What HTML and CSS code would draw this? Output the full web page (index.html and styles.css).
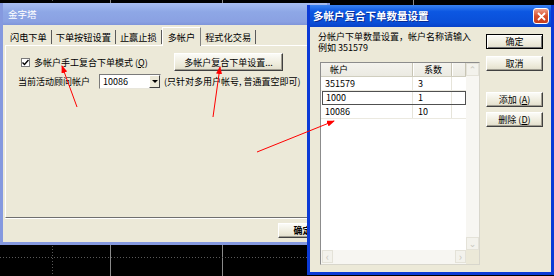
FILE: index.html
```html
<!DOCTYPE html>
<html lang="zh">
<head>
  <meta charset="UTF-8" />
  <title>金字塔</title>
  <link rel="stylesheet" href="styles.css">
</head>
<body>

  <div class="desk">
    <!-- chart background -->
    <svg class="chart" width="554" height="276">
      <line x1="52.5" y1="0" x2="52.5" y2="276" stroke="#5a5a5a" stroke-dasharray="1 2" />
      <line x1="110.5" y1="0" x2="110.5" y2="276" stroke="#8a8a8a" />
      <line x1="222.5" y1="0" x2="222.5" y2="276" stroke="#8a8a8a" />
      <line x1="413.5" y1="0" x2="413.5" y2="6" stroke="#8a8a8a" />
      <line x1="0" y1="257.5" x2="554" y2="257.5" stroke="#5a5a5a" stroke-dasharray="1 2" />
    </svg>

    <!-- main window -->
    <div class="win main-win">
      <div class="caption inactive">金字塔</div>
      <div class="client">
        <div class="tabs">
          <span class="tab">闪电下单</span>
          <span class="tab">下单按钮设置</span>
          <span class="tab">止赢止损</span>
          <span class="tab active">多帐户</span>
          <span class="tab">程式化交易</span>
        </div>
        <div class="panel">
          <div class="row">
            <label class="check">
              <span class="box">
                <svg width="7" height="7" viewBox="0 0 7 7"><path d="M0.5 3.5 L2.5 5.5 L6.5 1" fill="none" stroke="#000" stroke-width="1.4"/></svg>
              </span>
              <span>多帐户手工复合下单模式 (<u>Q</u>)</span>
            </label>
            <button class="btn wide">多帐户复合下单设置...</button>
          </div>
          <div class="row">
            <span class="label">当前活动顾问帐户</span>
            <div class="combo">
              <span class="combo-text">10086</span>
              <span class="drop"></span>
            </div>
            <span class="hint">(只针对多用户帐号, 普通置空即可)</span>
          </div>
        </div>
        <div class="footer">
          <button class="btn">确定</button>
        </div>
      </div>
    </div>

    <!-- settings dialog -->
    <div class="win dialog">
      <div class="caption active-cap">
        <span>多帐户复合下单数量设置</span>
        <span class="close">
          <svg width="9" height="9" viewBox="0 0 9 9"><path d="M1 1 L8 8 M8 1 L1 8" stroke="#fff" stroke-width="1.8"/></svg>
        </span>
      </div>
      <div class="client dlg-client">
        <div class="dlg-left">
          <p class="intro">分帐户下单数量设置，帐户名称请输入<br>例如 351579</p>
          <div class="list">
            <div class="list-main">
              <div class="list-cols">
                <div class="list-head">
                  <span class="c1">帐户</span>
                  <span class="c2">系数</span>
                  <span class="c3"></span>
                </div>
                <div class="list-row">
                  <span class="c1">351579</span><span class="c2">3</span><span class="c3"></span>
                </div>
                <div class="list-row focus">
                  <span class="c1">1000</span><span class="c2">1</span><span class="c3"></span>
                </div>
                <div class="list-row">
                  <span class="c1">10086</span><span class="c2">10</span><span class="c3"></span>
                </div>
              </div>
              <div class="vscroll">
                <span class="sbtn">&#8963;</span>
                <span class="sbtn">&#8964;</span>
              </div>
            </div>
            <div class="hscroll-row">
              <div class="hscroll">
                <span class="sbtn">&lsaquo;</span>
                <span class="sbtn">&rsaquo;</span>
              </div>
              <div class="corner"></div>
            </div>
          </div>
        </div>
        <div class="dlg-right">
          <button class="btn default">确定</button>
          <button class="btn">取消</button>
          <button class="btn gap">添加 (<u>A</u>)</button>
          <button class="btn">删除 (<u>D</u>)</button>
        </div>
      </div>
    </div>

    <!-- red arrows drawn over the screenshot -->
    <svg class="arrows" width="554" height="276">
      <defs>
        <marker id="head" markerWidth="8" markerHeight="6" refX="7" refY="3" orient="auto" markerUnits="userSpaceOnUse">
          <path d="M0 0 L8 3 L0 6 Z" fill="#f00"/>
        </marker>
      </defs>
      <line x1="77" y1="107" x2="62" y2="66" stroke="#f00" stroke-width="1" marker-end="url(#head)"/>
      <line x1="213" y1="117" x2="220" y2="67" stroke="#f00" stroke-width="1" marker-end="url(#head)"/>
      <line x1="257" y1="152" x2="334" y2="121" stroke="#f00" stroke-width="1" marker-end="url(#head)"/>
    </svg>
  </div>

</body>
</html>
```

FILE: styles.css
```css
* {
  box-sizing: border-box;
}

body {
  margin: 0;
  padding: 0;
  background-color: #000;
  font-family: "Noto Sans CJK SC", "DejaVu Sans", sans-serif;
  font-size: 9px;
  color: #000;
}

.desk {
  position: relative;
  width: 554px;
  height: 276px;
  overflow: hidden;
  background-color: #000;
}

.chart,
.arrows {
  position: absolute;
  top: 0;
  left: 0;
}

.arrows {
  pointer-events: none;
}

/* windows */

.win {
  position: absolute;
  display: flex;
  flex-direction: column;
  padding: 0 3px 3px 3px;
}

.main-win {
  left: 0;
  top: 3px;
  width: 330px;
  height: 242px;
  background-color: #8599df;
}

.dialog {
  left: 307px;
  top: 5px;
  width: 247px;
  height: 270px;
  background-color: #0b3ad6;
}

.caption {
  height: 22px;
  line-height: 22px;
  color: #fff;
  padding-left: 6px;
  display: flex;
  align-items: center;
  justify-content: space-between;
}

.caption.inactive {
  background: linear-gradient(to bottom, #a8bdf0, #8ea7e6 40%, #8aa1e2 85%, #7f95da);
  font-size: 9.5px;
  padding-left: 5px;
}

.caption.active-cap {
  background: linear-gradient(to bottom, #3a82f0, #0c57e2 30%, #0a4fd8 80%, #0842c9);
  font-size: 10.5px;
  font-weight: bold;
  padding-left: 3px;
  padding-right: 2px;
  text-shadow: 1px 1px 0 #0a2a90;
}

.close {
  width: 16px;
  height: 16px;
  border: 1px solid #fff;
  border-radius: 3px;
  background: linear-gradient(to bottom, #f0a08a, #d8502e 50%, #c43c1c);
  display: flex;
  align-items: center;
  justify-content: center;
}

.client {
  flex: 1;
  background-color: #ece9d8;
  display: flex;
  flex-direction: column;
}

/* main window content */

.tabs {
  display: flex;
  align-items: stretch;
  height: 18px;
  margin-top: 2px;
  padding-left: 3px;
  font-size: 9.2px;
}

.tab {
  display: flex;
  align-items: center;
  padding: 0 4px;
  border-right: 1px solid #5a5a5a;
  height: 14px;
  margin-top: 3px;
}

.tab.active {
  height: 19px;
  margin-top: 0;
  padding: 0 5px;
  border-right: 1px solid #808080;
  border-top: 1px solid #fff;
  border-left: 1px solid #fff;
  margin-bottom: -1px;
  background-color: #ece9d8;
  position: relative;
  z-index: 1;
}

.tab.active + .tab {
  padding-left: 4px;
}

.panel {
  height: 173px;
  margin-left: 2px;
  border-top: 1px solid #fff;
  border-left: 1px solid #fff;
  border-bottom: 1px solid #6f6f6f;
  box-shadow: 0 1px 0 #fff;
  padding: 7px 0 0 12px;
  display: flex;
  flex-direction: column;
  gap: 3px;
}

.row {
  display: flex;
  align-items: center;
  white-space: nowrap;
}

.check {
  display: flex;
  align-items: center;
  gap: 4px;
  margin-left: 3px;
  width: 150px;
}

.box {
  width: 9px;
  height: 9px;
  background-color: #fff;
  border: 1px solid #7a7a7a;
  display: flex;
  align-items: center;
  justify-content: center;
}

.btn {
  font-family: inherit;
  font-size: 9px;
  height: 15px;
  padding: 0;
  background: linear-gradient(to bottom, #fbfbf7, #ece9d8 70%, #e0ddcc);
  border: 1px solid;
  border-color: #fff #404040 #404040 #fff;
  box-shadow: inset -1px -1px 0 #a09d90;
  color: #000;
  line-height: 13px;
}

.btn.wide {
  width: 109px;
  height: 18px;
  margin-left: 3px;
}

.label {
  width: 81px;
}

.combo {
  width: 62px;
  height: 15px;
  background-color: #fff;
  border: 1px solid;
  border-color: #7a7a7a #e8e6dc #e8e6dc #7a7a7a;
  display: flex;
  align-items: center;
  justify-content: space-between;
  padding-left: 3px;
}

.drop {
  width: 11px;
  height: 13px;
  background: #ece9d8;
  border: 1px solid;
  border-color: #fff #404040 #404040 #fff;
  position: relative;
}

.drop::after {
  content: "";
  position: absolute;
  left: 2px;
  top: 4px;
  border-left: 3px solid transparent;
  border-right: 3px solid transparent;
  border-top: 3px solid #000;
}

.hint {
  margin-left: 3px;
}

.footer {
  flex: 1;
  display: flex;
  align-items: flex-start;
  padding: 5px 0 0 275px;
}

.footer .btn {
  width: 56px;
  font-weight: bold;
}

/* dialog content */

.dlg-client {
  flex-direction: row;
  padding: 4px 8px 7px 10px;
}

.dlg-left {
  width: 160px;
  display: flex;
  flex-direction: column;
}

.intro {
  margin: 0 0 9px -2px;
  line-height: 11px;
  height: 22px;
  white-space: nowrap;
}

.list {
  flex: 1;
  background-color: #fff;
  border: 1px solid;
  border-color: #8c8c8c #d8d6cc #d8d6cc #8c8c8c;
  display: flex;
  flex-direction: column;
}

.list-main {
  flex: 1;
  display: flex;
}

.list-cols {
  flex: 1;
}

.list-head,
.list-row {
  display: flex;
  height: 14px;
  align-items: center;
}

.list-head {
  background: linear-gradient(to bottom, #f4f3ee, #ebeae2);
  border-bottom: 1px solid #d0cebf;
}

.list-head span {
  height: 100%;
  display: flex;
  align-items: center;
  border-right: 1px solid #c8c5b5;
  box-shadow: 1px 0 0 #fff;
}

.list-head .c1 {
  padding-left: 9px;
}

.list-head .c2 {
  padding-left: 11px;
}

.c1 {
  width: 92px;
  padding-left: 4px;
}

.c2 {
  width: 39px;
  padding-left: 5px;
}

.c3 {
  flex: 1;
}

.list-row span {
  height: 100%;
  display: flex;
  align-items: center;
  border-right: 1px solid #e6e4da;
}

.list-row {
  border-bottom: 1px solid #ebe9e0;
}

.list-row .c3 {
  border-right: none;
}

.list-row.focus {
  outline: 1px solid #505050;
  outline-offset: -1px;
  margin-left: 1px;
}

.list-row.focus .c1 {
  width: 91px;
}

.vscroll {
  width: 13px;
  background-color: #f7f6f2;
  display: flex;
  flex-direction: column;
  justify-content: space-between;
}

.sbtn {
  width: 13px;
  height: 13px;
  background-color: #f3f2ec;
  border: 1px solid #e4e2d8;
  color: #c8c6bc;
  font-size: 9px;
  line-height: 11px;
  text-align: center;
}

.hscroll-row {
  display: flex;
  height: 14px;
}

.hscroll {
  flex: 1;
  background-color: #f7f6f2;
  display: flex;
  justify-content: space-between;
  padding-left: 1px;
}

.hscroll .sbtn {
  width: 11px;
  font-size: 11px;
}

.corner {
  width: 13px;
  background-color: #ece9d8;
}

.dlg-right {
  width: 57px;
  margin-left: 6px;
  padding-top: 3px;
  display: flex;
  flex-direction: column;
  gap: 7px;
}

.dlg-right .btn {
  width: 57px;
  height: 15px;
}

.btn.default {
  border: 1px solid #000;
  box-shadow: inset 1px 1px 0 #fff, inset -1px -1px 0 #707070;
}

.btn.gap {
  margin-top: 14px;
  margin-bottom: -2px;
}
```
